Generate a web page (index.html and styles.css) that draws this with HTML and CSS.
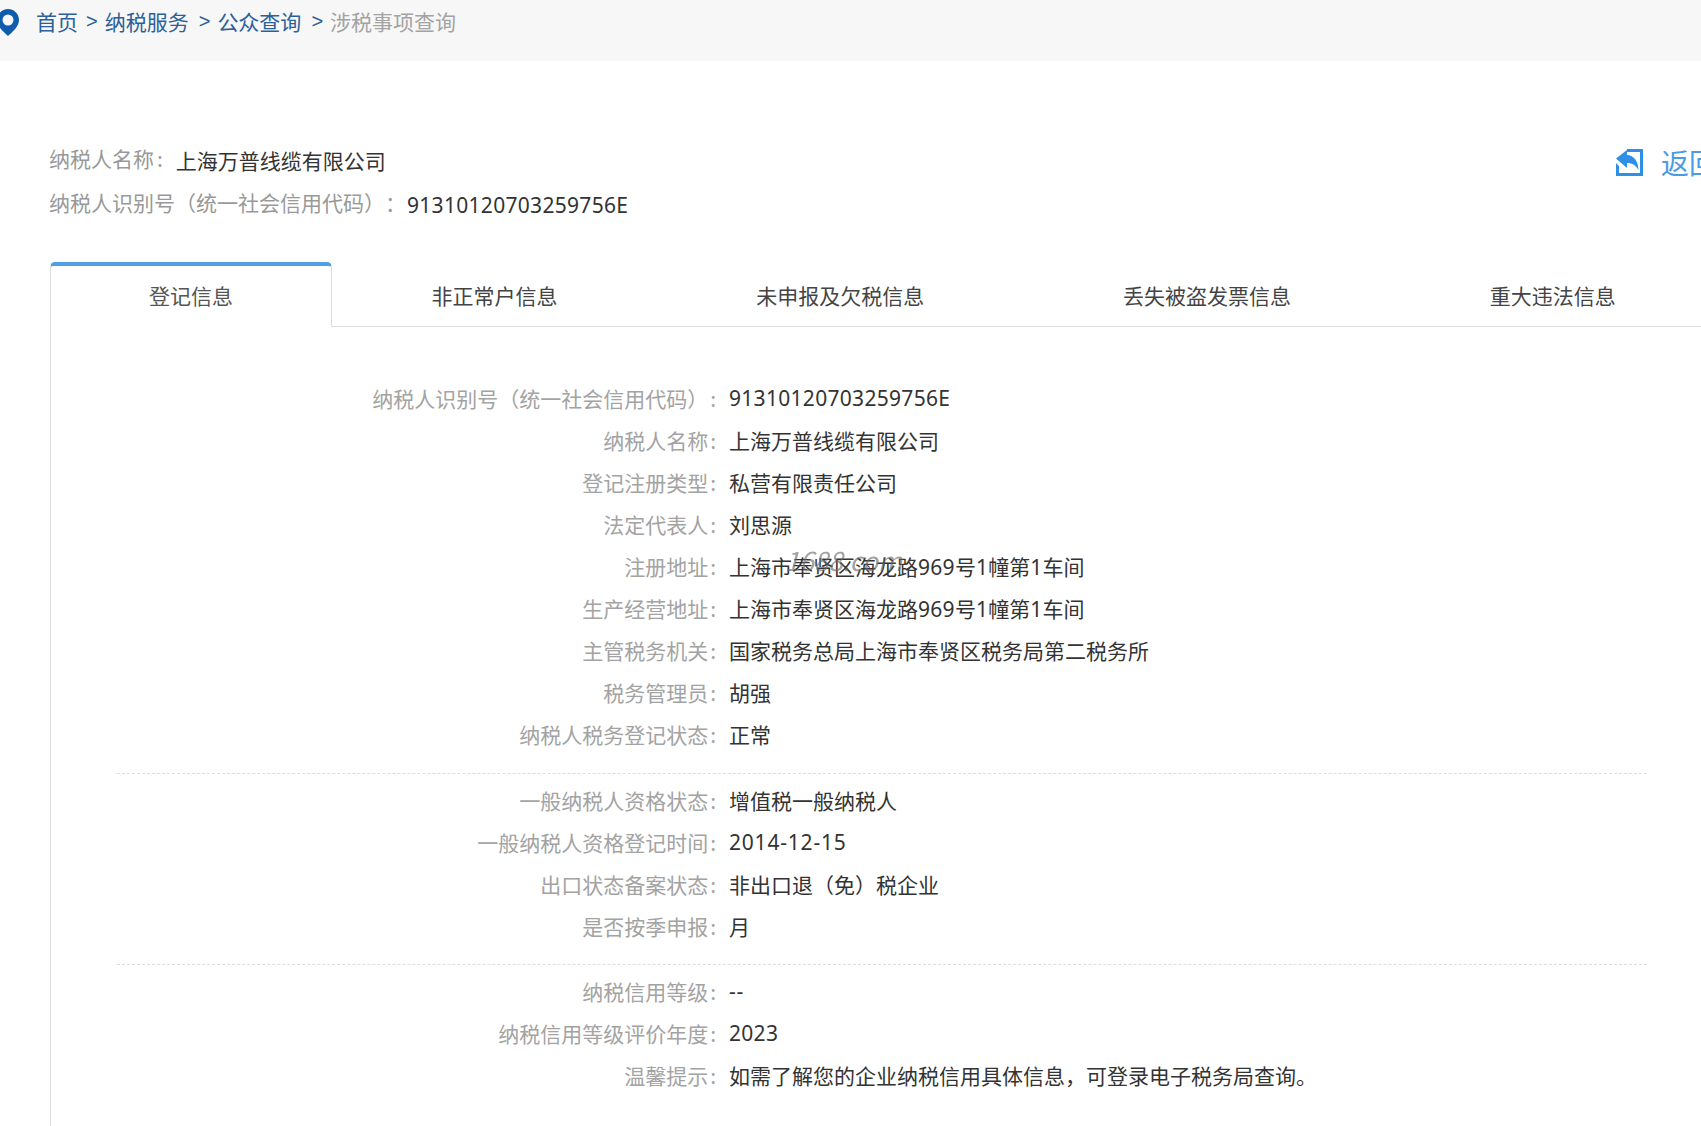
FILE: index.html
```html
<!DOCTYPE html>
<html lang="zh-CN">
<head>
<meta charset="utf-8">
<title>涉税事项查询</title>
<link rel="stylesheet" href="styles.css">
</head>
<body>
<nav class="crumbs">
  <svg class="pin" viewBox="0 0 22 27"><path fill="#0f5bad" fill-rule="evenodd" d="M11 0C5 0 0 4.700 0 11c0 6.500 7 12.500 11 16 4-3.500 11-9.500 11-16C22 4.700 17 0 11 0zm0 5.500a5.500 5.500 0 1 1 0 11 5.500 5.500 0 0 1 0-11z"/></svg>
  <a class="crumb-link">首页</a><span class="sep">&gt;</span>
  <a class="crumb-link">纳税服务</a><span class="sep">&gt;</span>
  <a class="crumb-link">公众查询</a><span class="sep">&gt;</span>
  <span class="crumb-now">涉税事项查询</span>
</nav>
<main class="page">
  <header class="summary">
    <div class="summary-text">
      <div class="summary-line"><span class="summary-label label-colon">纳税人名称</span><span class="summary-value">上海万普线缆有限公司</span></div>
      <div class="summary-line"><span class="summary-label">纳税人识别号（统一社会信用代码）：</span><span class="summary-value num id-value">91310120703259756E</span></div>
    </div>
    <a class="back">
      <svg class="back-icon" viewBox="0 0 27 27"><path fill="#2f8fe6" d="M11 0h16v27H0V14l3 3v7h21V3H11z"/><path fill="#2f8fe6" d="M0 9.500 11 1v5c6 .5 11 4.500 11.500 15-2.500-4.500-6-7-11.500-7v5z"/></svg>
      <span>返回</span>
    </a>
  </header>
  <ul class="tabs">
    <li class="tab active">登记信息</li>
    <li class="tab">非正常户信息</li>
    <li class="tab">未申报及欠税信息</li>
    <li class="tab">丢失被盗发票信息</li>
    <li class="tab">重大违法信息</li>
  </ul>
  <section class="panel">
    <dl class="group">
      <dt>纳税人识别号（统一社会信用代码）</dt><dd class="num">91310120703259756E</dd>
      <dt>纳税人名称</dt><dd>上海万普线缆有限公司</dd>
      <dt>登记注册类型</dt><dd>私营有限责任公司</dd>
      <dt>法定代表人</dt><dd>刘思源</dd>
      <dt>注册地址</dt><dd>上海市奉贤区海龙路<span class="num">969</span>号<span class="num">1</span>幢第<span class="num">1</span>车间</dd>
      <dt>生产经营地址</dt><dd>上海市奉贤区海龙路<span class="num">969</span>号<span class="num">1</span>幢第<span class="num">1</span>车间</dd>
      <dt>主管税务机关</dt><dd>国家税务总局上海市奉贤区税务局第二税务所</dd>
      <dt>税务管理员</dt><dd>胡强</dd>
      <dt>纳税人税务登记状态</dt><dd>正常</dd>
    </dl>
    <dl class="group">
      <dt>一般纳税人资格状态</dt><dd>增值税一般纳税人</dd>
      <dt>一般纳税人资格登记时间</dt><dd class="num date">2014-12-15</dd>
      <dt>出口状态备案状态</dt><dd>非出口退（免）税企业</dd>
      <dt>是否按季申报</dt><dd>月</dd>
    </dl>
    <dl class="group">
      <dt>纳税信用等级</dt><dd class="num date">--</dd>
      <dt>纳税信用等级评价年度</dt><dd class="num">2023</dd>
      <dt>温馨提示</dt><dd>如需了解您的企业纳税信用具体信息，可登录电子税务局查询。</dd>
    </dl>
    <span class="watermark">1688.com</span>
  </section>
</main>
</body>
</html>
```
FILE: styles.css
```css
* { box-sizing: border-box; }
html, body { margin: 0; height: 1126px; overflow: hidden; }
body {
  width: 1701px;
  font-family: "Noto Sans CJK SC", "Noto Sans", sans-serif;
  font-size: 21px;
  color: #333;
  background: #fff;
  text-spacing-trim: space-all;
}
.crumbs {
  display: flex;
  align-items: flex-start;
  height: 61px;
  padding-top: 6px;
  background: #f7f7f7;
  line-height: 30px;
  white-space: nowrap;
}
.pin { width: 22px; height: 27px; margin: 3px 17px 0 -3px; flex: none; }
.crumb-link { color: #2b6099; }
.crumb-now { color: #a3a3a3; }
.sep { margin: 0 7px 0 10px; color: #2b6099; font-family: "Liberation Sans", sans-serif; font-size: 20px; }
.sep:first-of-type { margin-left: 8px; }
.page { padding-left: 49px; }
.summary {
  display: flex;
  justify-content: space-between;
  align-items: flex-start;
  width: 1652px;
  padding-top: 83px;
  overflow: hidden;
}
.summary-line { display: flex; height: 44px; line-height: 32px; white-space: nowrap; }
.summary-label { color: #999; margin-top: -2px; }
.label-colon::after { content: ":"; margin-left: 3px; }
.summary-value { margin-left: 13px; color: #333; }
.summary-value.id-value { margin-top: 1px; margin-left: 1px; }
.back {
  display: flex;
  align-items: center;
  flex: none;
  gap: 18px;
  width: 85px;
  font-size: 28px;
  line-height: 36px;
  color: #4b9be3;
  white-space: nowrap;
}
.back-icon { width: 27px; height: 27px; flex: none; }
.num { letter-spacing: 0.3px; font-family: "Noto Sans", "Noto Sans CJK SC", sans-serif; }
.date { letter-spacing: 0.8px; }
.tabs {
  display: flex;
  width: 1652px;
  height: 65px;
  margin: 30px 0 0 1px;
  padding: 0;
  list-style: none;
  border-bottom: 1px solid #ddd;
  white-space: nowrap;
}
.tab {
  flex: none;
  height: 65px;
  padding: 0 99.4px;
  line-height: 67px;
  color: #444;
}
.tab.active {
  border: 1px solid #ddd;
  border-top: 4px solid #4f9fe5;
  border-bottom: 0;
  border-radius: 5px 5px 0 0;
  background: #fff;
  line-height: 58px;
  padding: 0 98px;
  color: #555;
}
.panel {
  position: relative;
  margin-left: 1px;
  padding: 50px 0 0 66px;
  border-left: 1px solid #ddd;
  height: 800px;
  width: 1652px;
}
.group {
  display: grid;
  grid-template-columns: 599px 1fr;
  grid-auto-rows: 42px;
  column-gap: 13px;
  width: 1530px;
  margin: 0 0 5px;
  padding-bottom: 18px;
  border-bottom: 1px dashed #ddd;
  line-height: 42px;
}
.group + .group { padding-bottom: 17px; }
.group:last-of-type { border-bottom: 0; }
.group dt { text-align: right; color: #a3a3a3; white-space: nowrap; }
.group dt::after { content: ":"; margin-left: 2px; }
.group dd { margin: 0; color: #333; white-space: nowrap; }
.watermark {
  position: absolute;
  left: 734px;
  top: 218px;
  font-size: 26px;
  line-height: 30px;
  font-style: italic;
  color: rgba(100, 100, 100, .6);
  filter: blur(.4px);
}
```
